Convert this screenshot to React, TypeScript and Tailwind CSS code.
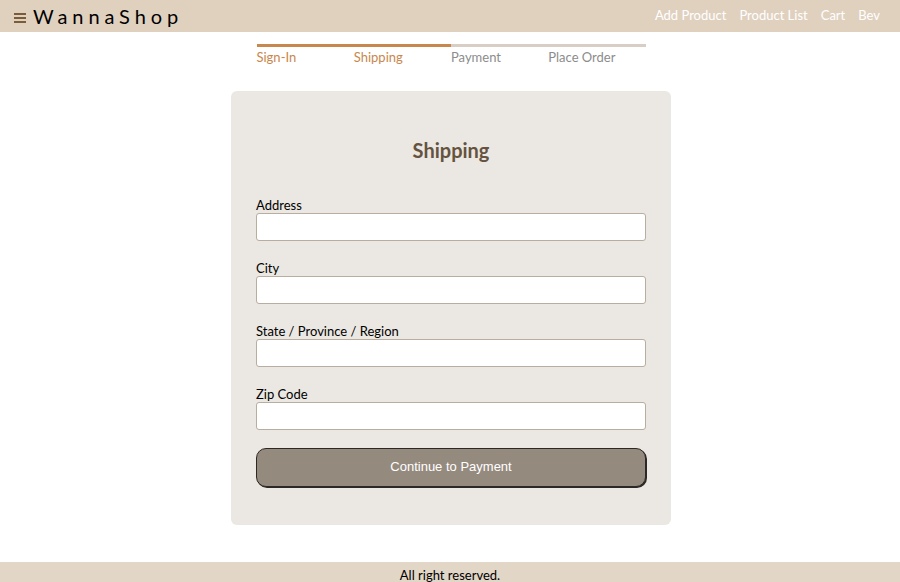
import React from "react";

const font = { fontFamily: "Lato, 'Noto Sans', sans-serif" };

function Field({ label }: { label: string }) {
  return (
    <div className="flex flex-col">
      <label className="text-[13px] leading-[16px] text-black">{label}</label>
      <input
        type="text"
        className="h-[28px] w-full rounded-[3px] border border-[#b9ada0] bg-white px-2 outline-none"
      />
    </div>
  );
}

export default function App() {
  return (
    <div className="flex min-h-[582px] flex-col bg-white" style={font}>
      <header className="flex h-[32px] items-center justify-between bg-[#e0d1bf] pl-[14px] pr-[20px]">
        <div className="flex items-center">
          <div className="mr-[7px] mt-[3px] flex w-[12px] flex-col gap-[2px]">
            <div className="h-[2px] bg-[#7a5c3a]" />
            <div className="h-[2px] bg-[#7a5c3a]" />
            <div className="h-[2px] bg-[#7a5c3a]" />
          </div>
          <span className="text-[20px] leading-none tracking-[0.245em] text-black">WannaShop</span>
        </div>
        <nav className="flex items-center gap-[13px] text-[13px] text-white">
          <span>Add Product</span>
          <span>Product List</span>
          <span>Cart</span>
          <span>Bev</span>
        </nav>
      </header>

      <main className="flex flex-1 flex-col items-center">
        <div className="ml-[2px] mt-[12px] grid w-[389px] grid-cols-4 text-[13px]">
          <div className="border-t-[3px] border-[#c8874d] pt-[1px] text-[#c8874d]">Sign-In</div>
          <div className="border-t-[3px] border-[#c8874d] pt-[1px] text-[#c8874d]">Shipping</div>
          <div className="border-t-[3px] border-[#d8cec6] pt-[1px] text-[#8c8c8c]">Payment</div>
          <div className="border-t-[3px] border-[#d8cec6] pt-[1px] text-[#8c8c8c]">Place Order</div>
        </div>

        <div className="ml-[2px] mt-[23px] w-[440px] rounded-[6px] bg-[#ebe7e2] px-[25px] pb-[38px] pt-[45px]">
          <h1 className="text-center text-[20px] font-bold leading-[28px] text-[#65533f]">Shipping</h1>
          <div className="mt-[33px] flex flex-col gap-[19px]">
            <Field label="Address" />
            <Field label="City" />
            <Field label="State / Province / Region" />
            <Field label="Zip Code" />
          </div>
          <button
            className="mt-[18px] h-[39px] w-full rounded-[10px] border border-[#2b2825] bg-[#958a7e] text-[13px] text-white shadow-[1px_1px_0_#2b2825]"
            style={{ fontFamily: "'Liberation Sans', Arial, sans-serif" }}
          >
            Continue to Payment
          </button>
        </div>
      </main>

      <footer className="mt-[37px] flex h-[20px] items-start justify-center bg-[#e2d6c7] pt-[5px] text-[13px] leading-[16px] text-black">
        All right reserved.
      </footer>
    </div>
  );
}
